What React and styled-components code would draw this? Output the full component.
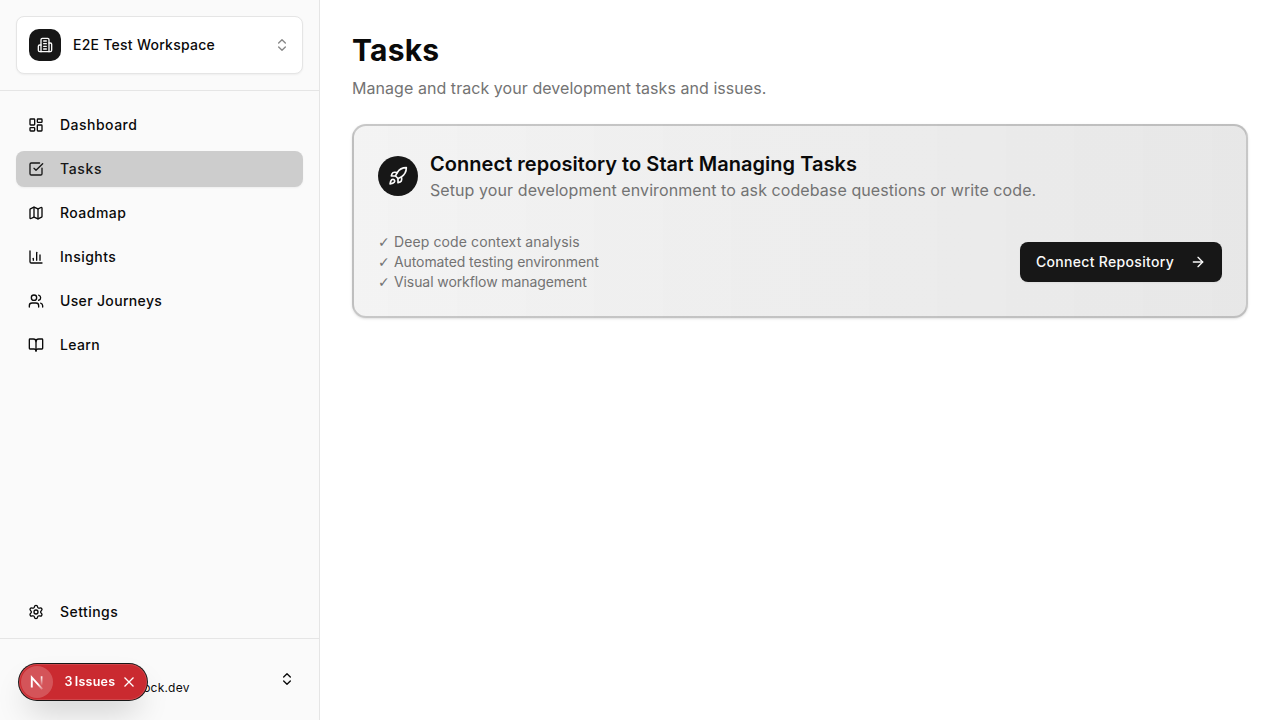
import React from "react";
import styled, { createGlobalStyle } from "styled-components";
import {
  ChevronsUpDown, LayoutDashboard, SquareCheckBig, Map, ChartColumn,
  Users, BookOpen, Settings, ArrowRight,
} from "lucide-react";

const GlobalStyle = createGlobalStyle`
  *, *::before, *::after { box-sizing: border-box; }
  body {
    margin: 0;
    background: #fff;
    color: #0a0a0a;
    font-family: Inter, sans-serif;
    font-size: 16px;
    line-height: 24px;
  }
  h1, h3, p { margin: 0; }
  button { font: inherit; color: inherit; cursor: pointer; }
  svg { display: block; flex-shrink: 0; }
`;

const Page = styled.div`
  display: flex;
  height: 100vh;
  overflow: hidden;
`;

const Sidebar = styled.aside`
  display: flex;
  flex-direction: column;
  width: 320px;
  flex-shrink: 0;
  background: #fafafa;
  border-right: 1px solid #e5e5e5;
`;

const SidebarHeader = styled.div`
  padding: 16px;
  border-bottom: 1px solid #e5e5e5;
`;

const WorkspaceButton = styled.button`
  display: flex;
  align-items: center;
  gap: 12px;
  width: 100%;
  height: 58px;
  padding: 0 12px;
  background: #fff;
  border: 1px solid #e5e5e5;
  border-radius: 8px;
  box-shadow: 0 1px 2px rgba(0, 0, 0, 0.05);
  font-size: 14px;
  font-weight: 500;
  letter-spacing: 0.26px;
  text-align: left;

  > svg { color: #737373; opacity: 0.85; }
`;

const WorkspaceIcon = styled.span`
  display: flex;
  align-items: center;
  justify-content: center;
  width: 32px;
  height: 32px;
  background: #171717;
  color: #fafafa;
  border-radius: 10px;
`;

const Grow = styled.span`
  flex: 1;
`;

const Nav = styled.nav`
  display: flex;
  flex: 1;
  flex-direction: column;
  gap: 8px;
  padding: 16px;
`;

const NavItem = styled.button`
  display: flex;
  align-items: center;
  gap: 16px;
  width: 100%;
  height: 36px;
  padding: 0 12px;
  border: 0;
  border-radius: 8px;
  background: ${(p) => (p.$active ? "rgba(23, 23, 23, 0.2)" : "transparent")};
  box-shadow: ${(p) => (p.$active ? "0 1px 2px rgba(0, 0, 0, 0.05)" : "none")};
  color: ${(p) => (p.$active ? "#171717" : "#0a0a0a")};
  font-size: 14px;
  font-weight: 500;
  letter-spacing: ${(p) => p.$tracking}px;
`;

const SettingsArea = styled.div`
  padding: 0 16px 8px;
`;

const UserArea = styled.div`
  height: 82px;
  padding: 16px;
  border-top: 1px solid #e5e5e5;
`;

const UserButton = styled.button`
  display: flex;
  align-items: center;
  width: 100%;
  height: 48px;
  padding: 0 8px 0 12px;
  border: 0;
  background: transparent;
`;

const UserText = styled.span`
  flex: 1;
  padding-top: 18px;
  padding-left: 40px;
  font-size: 12px;
  line-height: 16px;
  letter-spacing: 0.22px;
  text-align: left;
`;

const Main = styled.main`
  display: flex;
  flex: 1;
  flex-direction: column;
  gap: 24px;
  padding: 32px;
`;

const Title = styled.h1`
  font-size: 30px;
  line-height: 36px;
  font-weight: 700;
  letter-spacing: 0.2px;
`;

const Subtitle = styled.p`
  margin-top: 8px;
  color: #737373;
  letter-spacing: 0.055px;
`;

const Card = styled.section`
  display: flex;
  flex-direction: column;
  gap: 30px;
  height: 194px;
  padding: 24px;
  border: 2px solid rgba(23, 23, 23, 0.2);
  border-radius: 14px;
  background: linear-gradient(to right, rgba(23, 23, 23, 0.05), rgba(23, 23, 23, 0.1));
  box-shadow: 0 1px 3px rgba(0, 0, 0, 0.1), 0 1px 2px -1px rgba(0, 0, 0, 0.1);
`;

const CardHeader = styled.div`
  display: flex;
  align-items: center;
  gap: 12px;
`;

const RocketBadge = styled.span`
  display: flex;
  align-items: center;
  justify-content: center;
  width: 40px;
  height: 40px;
  border-radius: 50%;
  background: #171717;
  color: #fafafa;
`;

const CardTitle = styled.h3`
  font-size: 20px;
  line-height: 28px;
  font-weight: 600;
  letter-spacing: 0.045px;
`;

const CardDescription = styled.p`
  color: #737373;
  letter-spacing: 0.083px;
`;

const CardBody = styled.div`
  display: flex;
  align-items: center;
  justify-content: space-between;
`;

const Feature = styled.p`
  display: flex;
  color: #737373;
  font-size: 14px;
  line-height: 20px;
  letter-spacing: ${(p) => p.$tracking}px;
`;

const Check = styled.span`
  width: 16px;
  font-family: "DejaVu Sans", sans-serif;
  letter-spacing: 0;
`;

const ConnectButton = styled.button`
  display: flex;
  align-items: center;
  gap: 16px;
  height: 40px;
  padding: 0 16px;
  border: 0;
  border-radius: 8px;
  background: #171717;
  color: #fafafa;
  box-shadow: 0 1px 2px rgba(0, 0, 0, 0.05);
  font-size: 14px;
  font-weight: 500;
  letter-spacing: 0.31px;
`;

const IssuesPill = styled.div`
  position: fixed;
  left: 19px;
  bottom: 20px;
  display: flex;
  align-items: center;
  width: 128px;
  height: 36px;
  padding: 2px;
  border-radius: 18px;
  background: #ca2a30;
  color: #fff;
  box-shadow:
    0 0 0 1px #171717,
    inset 0 0 0 1px rgba(255, 255, 255, 0.13),
    0 16px 32px -8px rgba(0, 0, 0, 0.24);
`;

const LogoDisc = styled.span`
  display: flex;
  align-items: center;
  justify-content: center;
  width: 32px;
  height: 32px;
  border-radius: 50%;
  background: rgba(255, 255, 255, 0.2);
`;

const IssuesLabel = styled.span`
  display: flex;
  gap: 2px;
  width: 51px;
  margin-left: 11.5px;
  font-size: 12.5px;
  font-weight: 600;
  line-height: 16px;
  letter-spacing: 0.25px;
  white-space: nowrap;
`;

const CloseIcon = styled.svg`
  margin-left: 7.5px;
`;

const navItems = [
  ["Dashboard", LayoutDashboard, 0.48],
  ["Tasks", SquareCheckBig, 0.65],
  ["Roadmap", Map, 0.45],
  ["Insights", ChartColumn, 0.47],
  ["User Journeys", Users, 0.34],
  ["Learn", BookOpen, 0.38],
];

const features = [
  ["Deep code context analysis", 0.11],
  ["Automated testing environment", -0.09],
  ["Visual workflow management", -0.09],
];

function LineIcon({ size, paths }) {
  return (
    <svg
      width={size}
      height={size}
      viewBox="0 0 24 24"
      fill="none"
      stroke="currentColor"
      strokeWidth="2"
      strokeLinecap="round"
      strokeLinejoin="round"
    >
      {paths.map((d) => <path key={d} d={d} />)}
    </svg>
  );
}

const buildingPaths = [
  "M6 22V4a2 2 0 0 1 2-2h8a2 2 0 0 1 2 2v18Z",
  "M6 12H4a2 2 0 0 0-2 2v6a2 2 0 0 0 2 2h2",
  "M18 9h2a2 2 0 0 1 2 2v9a2 2 0 0 1-2 2h-2",
  "M10 6h4",
  "M10 10h4",
  "M10 14h4",
  "M10 18h4",
];

const rocketPaths = [
  "M4.5 16.5c-1.5 1.26-2 5-2 5s3.74-.5 5-2c.71-.84.7-2.13-.09-2.91a2.18 2.18 0 0 0-2.91-.09z",
  "m12 15-3-3a22 22 0 0 1 2-3.95A12.88 12.88 0 0 1 22 2c0 2.72-.78 7.5-6 11a22.35 22.35 0 0 1-4 2z",
  "M9 12H4s.55-3.03 2-4c1.62-1.08 5 0 5 0",
  "M12 15v5s3.03-.55 4-2c1.08-1.62 0-5 0-5",
];

function NextLogo() {
  return (
    <svg width="32" height="32" viewBox="0 0 32 32" fill="none">
      <defs>
        <linearGradient id="diagonal" x1="17" y1="18" x2="22" y2="24" gradientUnits="userSpaceOnUse">
          <stop stopColor="#fff" />
          <stop offset="1" stopColor="#fff" stopOpacity="0.1" />
        </linearGradient>
        <linearGradient id="stem" x1="20" y1="10" x2="20" y2="20" gradientUnits="userSpaceOnUse">
          <stop stopColor="#fff" />
          <stop offset="1" stopColor="#fff" stopOpacity="0" />
        </linearGradient>
      </defs>
      <path d="M10.8 21.6V11.4L21.3 23.2" stroke="url(#diagonal)" strokeWidth="1.9" />
      <path d="M20.6 10.3V19.5" stroke="url(#stem)" strokeWidth="1.7" />
    </svg>
  );
}

export default function App() {
  return (
    <Page>
      <GlobalStyle />
      <Sidebar>
        <SidebarHeader>
          <WorkspaceButton>
            <WorkspaceIcon><LineIcon size={16} paths={buildingPaths} /></WorkspaceIcon>
            <Grow>E2E Test Workspace</Grow>
            <ChevronsUpDown size={16} />
          </WorkspaceButton>
        </SidebarHeader>
        <Nav>
          {navItems.map(([label, Icon, tracking]) => (
            <NavItem key={label} $active={label === "Tasks"} $tracking={tracking}>
              <Icon size={16} />
              {label}
            </NavItem>
          ))}
        </Nav>
        <SettingsArea>
          <NavItem $tracking={0.46}><Settings size={16} />Settings</NavItem>
        </SettingsArea>
        <UserArea>
          <UserButton>
            <UserText>dev-user@mock.dev</UserText>
            <ChevronsUpDown size={16} />
          </UserButton>
        </UserArea>
      </Sidebar>
      <Main>
        <header>
          <Title>Tasks</Title>
          <Subtitle>Manage and track your development tasks and issues.</Subtitle>
        </header>
        <Card>
          <CardHeader>
            <RocketBadge><LineIcon size={20} paths={rocketPaths} /></RocketBadge>
            <div>
              <CardTitle>Connect repository to Start Managing Tasks</CardTitle>
              <CardDescription>
                Setup your development environment to ask codebase questions or write code.
              </CardDescription>
            </div>
          </CardHeader>
          <CardBody>
            <div>
              {features.map(([text, tracking]) => (
                <Feature key={text} $tracking={tracking}><Check>✓</Check>{text}</Feature>
              ))}
            </div>
            <ConnectButton>Connect Repository<ArrowRight size={16} /></ConnectButton>
          </CardBody>
        </Card>
      </Main>
      <IssuesPill>
        <LogoDisc><NextLogo /></LogoDisc>
        <IssuesLabel><span>3</span><span>Issues</span></IssuesLabel>
        <CloseIcon width="12" height="12" viewBox="0 0 12 12" stroke="#fff" strokeWidth="1.3">
          <path d="M1.5 1.5l9 9M10.5 1.5l-9 9" />
        </CloseIcon>
      </IssuesPill>
    </Page>
  );
}
